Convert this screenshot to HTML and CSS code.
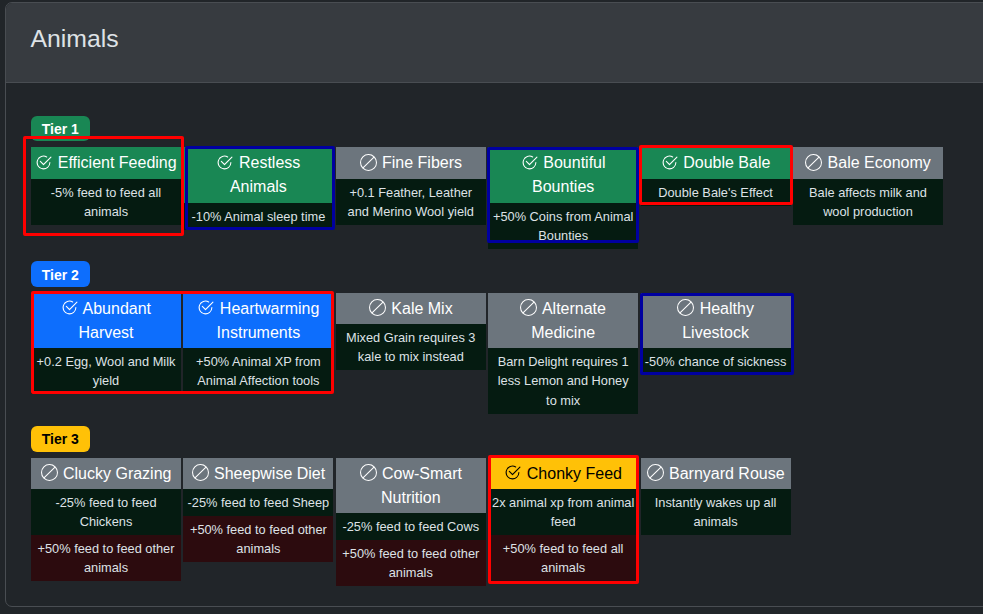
FILE: index.html
```html
<!DOCTYPE html>
<html lang="en">
<head>
<meta charset="utf-8">
<title>Animals</title>
<link rel="stylesheet" href="styles.css">
</head>
<body>
<svg class="sprite" aria-hidden="true">
  <symbol id="on" viewBox="0 0 16 16">
    <path d="M2.5 8a5.5 5.5 0 0 1 8.25-4.764.5.5 0 0 0 .5-.866A6.5 6.5 0 1 0 14.5 8a.5.5 0 0 0-1 0 5.5 5.5 0 1 1-11 0"/>
    <path d="M15.354 3.354a.5.5 0 0 0-.708-.708L8 9.293 5.354 6.646a.5.5 0 1 0-.708.708l3 3a.5.5 0 0 0 .708 0z"/>
  </symbol>
  <symbol id="off" viewBox="0 0 16 16">
    <path d="M15 8a6.97 6.97 0 0 0-1.71-4.584l-9.874 9.875A7 7 0 0 0 15 8M2.71 12.584l9.874-9.875a7 7 0 0 0-9.874 9.874ZM16 8A8 8 0 1 1 0 8a8 8 0 0 1 16 0"/>
  </symbol>
</svg>
<main class="card">
  <header class="card-header"><h1>Animals</h1></header>
  <div class="card-body">
    <section class="tier">
      <span class="badge green">Tier 1</span>
      <div class="row">
        <article class="cell"><h2 class="green"><svg class="icon"><use href="#on"/></svg> Efficient Feeding</h2><p class="good">-5% feed to feed all animals</p></article>
        <article class="cell"><h2 class="green"><svg class="icon"><use href="#on"/></svg> Restless Animals</h2><p class="good">-10% Animal sleep time</p></article>
        <article class="cell"><h2 class="grey"><svg class="icon"><use href="#off"/></svg> Fine Fibers</h2><p class="good">+0.1 Feather, Leather and Merino Wool yield</p></article>
        <article class="cell"><h2 class="green"><svg class="icon"><use href="#on"/></svg> Bountiful Bounties</h2><p class="good">+50% Coins from Animal Bounties</p></article>
        <article class="cell"><h2 class="green"><svg class="icon"><use href="#on"/></svg> Double Bale</h2><p class="good">Double Bale's Effect</p></article>
        <article class="cell"><h2 class="grey"><svg class="icon"><use href="#off"/></svg> Bale Economy</h2><p class="good">Bale affects milk and wool production</p></article>
      </div>
    </section>
    <section class="tier">
      <span class="badge blue">Tier 2</span>
      <div class="row">
        <article class="cell"><h2 class="blue"><svg class="icon"><use href="#on"/></svg> Abundant Harvest</h2><p class="good">+0.2 Egg, Wool and Milk yield</p></article>
        <article class="cell"><h2 class="blue"><svg class="icon"><use href="#on"/></svg> Heartwarming Instruments</h2><p class="good">+50% Animal XP from Animal Affection tools</p></article>
        <article class="cell"><h2 class="grey"><svg class="icon"><use href="#off"/></svg> Kale Mix</h2><p class="good">Mixed Grain requires 3 kale to mix instead</p></article>
        <article class="cell"><h2 class="grey"><svg class="icon"><use href="#off"/></svg> Alternate Medicine</h2><p class="good">Barn Delight requires 1 less Lemon and Honey to mix</p></article>
        <article class="cell"><h2 class="grey"><svg class="icon"><use href="#off"/></svg> Healthy Livestock</h2><p class="good">-50% chance of sickness</p></article>
      </div>
    </section>
    <section class="tier">
      <span class="badge yellow">Tier 3</span>
      <div class="row">
        <article class="cell"><h2 class="grey"><svg class="icon"><use href="#off"/></svg> Clucky Grazing</h2><p class="good">-25% feed to feed Chickens</p><p class="bad">+50% feed to feed other animals</p></article>
        <article class="cell"><h2 class="grey"><svg class="icon"><use href="#off"/></svg> Sheepwise Diet</h2><p class="good">-25% feed to feed Sheep</p><p class="bad">+50% feed to feed other animals</p></article>
        <article class="cell"><h2 class="grey"><svg class="icon"><use href="#off"/></svg> Cow-Smart Nutrition</h2><p class="good">-25% feed to feed Cows</p><p class="bad">+50% feed to feed other animals</p></article>
        <article class="cell"><h2 class="yellow"><svg class="icon"><use href="#on"/></svg> Chonky Feed</h2><p class="good">2x animal xp from animal feed</p><p class="bad">+50% feed to feed all animals</p></article>
        <article class="cell"><h2 class="grey"><svg class="icon"><use href="#off"/></svg> Barnyard Rouse</h2><p class="good">Instantly wakes up all animals</p></article>
      </div>
    </section>
  </div>
</main>
<div class="mark red m-efficient"></div>
<div class="mark navy m-restless"></div>
<div class="mark navy m-bountiful"></div>
<div class="mark red m-double"></div>
<div class="mark red m-tier2"></div>
<div class="mark navy m-healthy"></div>
<div class="mark red m-chonky"></div>
</body>
</html>
```

FILE: styles.css
```css
html, body {
  margin: 0;
  height: 100%;
  overflow: hidden;
}
body {
  position: relative;
  background: #212529;
  color: #dee2e6;
  font-family: "Liberation Sans", Arial, sans-serif;
  font-size: 16px;
  line-height: 1.5;
}
.sprite {
  display: none;
}
.card {
  width: 1000px;
  margin: 2px 0 0 5px;
  height: 605px;
  box-sizing: border-box;
  border: 1px solid #494d52;
  border-radius: 7px;
  overflow: hidden;
}
.card-header {
  height: 79px;
  box-sizing: content-box;
  background: #373b40;
  border-bottom: 1px solid #494d52;
  padding: 0 24.5px;
  display: flex;
  align-items: center;
}
h1 {
  margin: 0 0 8px;
  font-size: 24.8px;
  font-weight: 400;
  line-height: 1.2;
}
.card-body {
  padding: 32.65px 25px 0;
  display: flex;
  flex-direction: column;
  gap: 12.5px;
}
.tier {
  display: flex;
  flex-direction: column;
  align-items: flex-start;
  gap: 6px;
}
.badge {
  padding: 5.2px 10.8px 4.4px;
  border-radius: 6px;
  font-size: 14px;
  font-weight: 700;
  line-height: 16px;
  color: #fff;
}
.row {
  display: flex;
  align-items: flex-start;
  gap: 2.4px;
}
.cell {
  flex: 0 0 150px;
  width: 150px;
  text-align: center;
}
h2 {
  margin: 0;
  padding: 3.8px 3px;
  font-size: 16px;
  font-weight: 400;
  line-height: 24px;
  color: #fff;
}
p {
  margin: 0;
  padding: 3.8px 3px;
  font-size: 12.8px;
  line-height: 19.2px;
  color: #dee2e6;
}
.green { background: #198754; }
.blue { background: #0d6efd; }
.grey { background: #6c757d; }
.yellow { background: #ffc107; color: #000; }
.good { background: #051b11; }
.bad { background: #2c0b0e; }
.icon {
  width: 17px;
  height: 17px;
  margin-right: 1px;
  fill: currentColor;
  vertical-align: -2.5px;
}
.mark {
  position: absolute;
  box-sizing: border-box;
  border: 3px solid;
  border-radius: 2px;
}
.red { border-color: #f00; }
.navy { border-color: #0000a0; }
.m-efficient { left: 23px; top: 136px; width: 161px; height: 100px; }
.m-restless { left: 185px; top: 146px; width: 150px; height: 84px; }
.m-bountiful { left: 487px; top: 147px; width: 152px; height: 96px; }
.m-double { left: 639px; top: 145px; width: 154px; height: 60px; }
.m-tier2 { left: 31px; top: 291px; width: 303px; height: 103px; }
.m-healthy { left: 640px; top: 293px; width: 154px; height: 82px; }
.m-chonky { left: 488px; top: 455px; width: 151px; height: 129px; }
```
